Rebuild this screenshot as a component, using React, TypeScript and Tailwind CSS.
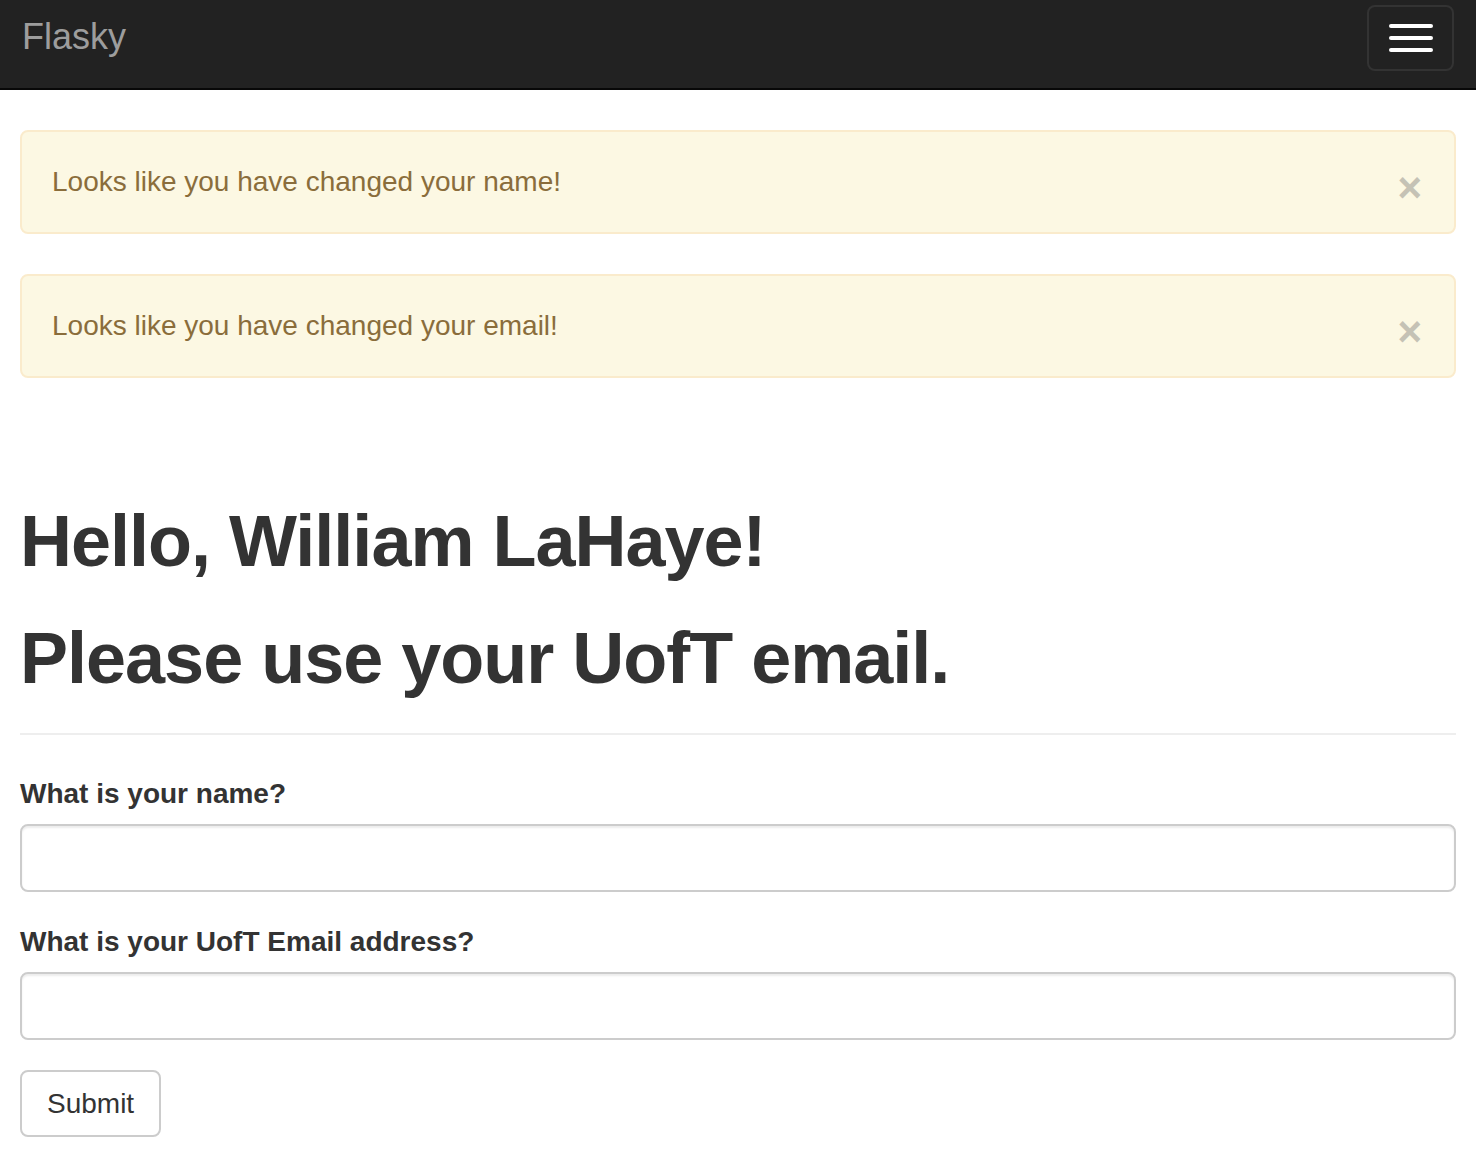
import React from 'react';

const font = { fontFamily: '"Liberation Sans", Arial, sans-serif' };

function Alert({ text }: { text: string }) {
  return (
    <div className="flex items-start justify-between rounded-lg border-2 border-[#faebcc] bg-[#fcf8e3] px-[30px] py-[30px] mb-[40px]">
      <span className="block text-[28px] leading-[40px] text-[#8a6d3b]">{text}</span>
      <button className="mr-[2px] block h-[40px] overflow-visible text-[42px] font-bold leading-[52px] text-[#c5c2b5]">×</button>
    </div>
  );
}

export default function App() {
  return (
    <div className="min-h-screen bg-white text-[#333]" style={font}>
      <nav className="flex h-[90px] items-start justify-between border-b-2 border-[#080808] bg-[#222] pl-[22px] pr-[22px]">
        <a className="mt-[17px] text-[36px] leading-[40px] text-[#9d9d9d]">Flasky</a>
        <button className="mt-[5px] flex h-[66px] w-[87px] flex-col items-center justify-center gap-[8px] rounded-lg border-2 border-[#333]">
          <span className="block h-[4px] w-[44px] rounded-sm bg-white" />
          <span className="block h-[4px] w-[44px] rounded-sm bg-white" />
          <span className="block h-[4px] w-[44px] rounded-sm bg-white" />
        </button>
      </nav>

      <main className="px-[20px] pt-[40px]">
        <Alert text="Looks like you have changed your name!" />
        <Alert text="Looks like you have changed your email!" />

        <div className="mt-[123px] border-b-2 border-[#eee] pb-[35px]">
          <h1 className="text-[72px] font-bold leading-[80px] tracking-[-1px]">Hello, William LaHaye!</h1>
          <h1 className="mt-[37px] text-[72px] font-bold leading-[80px] tracking-[-1px]">Please use your UofT email.</h1>
        </div>

        <form className="mt-[39px]">
          <div className="mb-[30px]">
            <label className="mb-[10px] block text-[28px] font-bold leading-[40px]">What is your name?</label>
            <input className="block h-[68px] w-full rounded-lg border-2 border-[#ccc] px-[24px] text-[28px] shadow-[inset_0_2px_2px_rgba(0,0,0,0.075)]" />
          </div>
          <div className="mb-[30px]">
            <label className="mb-[10px] block text-[28px] font-bold leading-[40px]">What is your UofT Email address?</label>
            <input className="block h-[68px] w-full rounded-lg border-2 border-[#ccc] px-[24px] text-[28px] shadow-[inset_0_2px_2px_rgba(0,0,0,0.075)]" />
          </div>
          <button className="h-[67px] rounded-lg border-2 border-[#ccc] bg-white px-[25px] text-[28px] leading-[40px] text-[#333]">Submit</button>
        </form>
      </main>
    </div>
  );
}
